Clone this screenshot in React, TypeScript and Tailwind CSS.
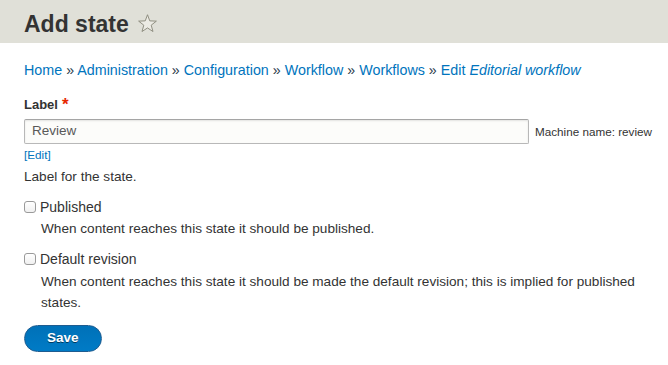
import React from "react";

const font = { fontFamily: '"Liberation Sans", Arial, sans-serif' };

function Star() {
  return (
    <svg width="19" height="19" viewBox="0 0 18 18" className="mb-[3px] ml-[9px] shrink-0">
      <path
        d="M9 0.7 L11.15 6.5 L17.4 6.75 L12.5 10.6 L14.2 16.6 L9 13.2 L3.8 16.6 L5.5 10.6 L0.6 6.75 L6.85 6.5 Z"
        fill="#ecebe4"
        stroke="#8b8a7c"
        strokeWidth="0.9"
        strokeLinejoin="miter"
      />
    </svg>
  );
}

function Checkbox() {
  return (
    <span className="inline-block w-[12px] h-[12px] shrink-0 rounded-[3px] border border-[#9a9a9a] bg-gradient-to-b from-white to-[#f0f0f0] shadow-[inset_0_1px_0_rgba(255,255,255,0.8)]" />
  );
}

export default function App() {
  return (
    <div className="w-[668px] h-[365px] bg-white text-[#333] overflow-hidden" style={font}>
      <div className="h-[43px] bg-[#e0e0d8] flex items-end pl-[24px] pb-[7px]">
        <h1 className="text-[23px] leading-none font-bold text-[#333]">Add state</h1>
        <Star />
      </div>

      <div className="px-[24px]">
        <div className="mt-[17px] text-[14.3px] leading-[20px] text-[#0074bd] whitespace-nowrap">
          <span>Home</span> <span className="text-[#2a3a4a]">»</span> <span>Administration</span>{" "}
          <span className="text-[#2a3a4a]">»</span> <span>Configuration</span> <span className="text-[#2a3a4a]">»</span>{" "}
          <span>Workflow</span> <span className="text-[#2a3a4a]">»</span> <span>Workflows</span>{" "}
          <span className="text-[#2a3a4a]">»</span> <span>Edit <em>Editorial workflow</em></span>
        </div>

        <div className="mt-[16px] h-[18px] flex items-start text-[13px] leading-[18px] font-bold">
          <span>Label</span>
          <span className="ml-[4px] text-[#e62600] font-bold text-[17px] leading-[17px]">*</span>
        </div>

        <div className="mt-[5px] flex items-center whitespace-nowrap">
          <div className="w-[505px] h-[25px] shrink-0 rounded-[2px] border border-[#b8b8b8] border-t-[#a5a5a5] bg-[#fcfcfa] shadow-[inset_0_1px_2px_rgba(0,0,0,0.1)] flex items-center pl-[7px] text-[13.5px] text-[#595959]">
            Review
          </div>
          <span className="ml-[6px] shrink-0 text-[11.7px] text-[#333]">Machine name: review</span>
        </div>

        <div className="mt-[4px] text-[11.7px] leading-[14px] text-[#0074bd]">[Edit]</div>

        <div className="mt-[6px] text-[13.6px] leading-[18px]">Label for the state.</div>

        <div className="mt-[11px] flex items-center h-[20px]">
          <Checkbox />
          <span className="ml-[4px] text-[14px] leading-[20px]">Published</span>
        </div>
        <div className="mt-[2px] ml-[17px] text-[13.6px] leading-[20px]">
          When content reaches this state it should be published.
        </div>

        <div className="mt-[10px] flex items-center h-[20px]">
          <Checkbox />
          <span className="ml-[4px] text-[14px] leading-[20px]">Default revision</span>
        </div>
        <div className="mt-[2px] ml-[17px] text-[13.6px] leading-[21px]">
          When content reaches this state it should be made the default revision; this is implied for published states.
        </div>

        <div className="mt-[12px]">
          <button className="h-[27px] px-[22px] rounded-full border border-[#1e5c90] bg-gradient-to-t from-[#007bc6] to-[#0071b8] text-white font-bold text-[13.5px] [text-shadow:0_1px_rgba(0,0,0,0.5)]">
            Save
          </button>
        </div>
      </div>
    </div>
  );
}
